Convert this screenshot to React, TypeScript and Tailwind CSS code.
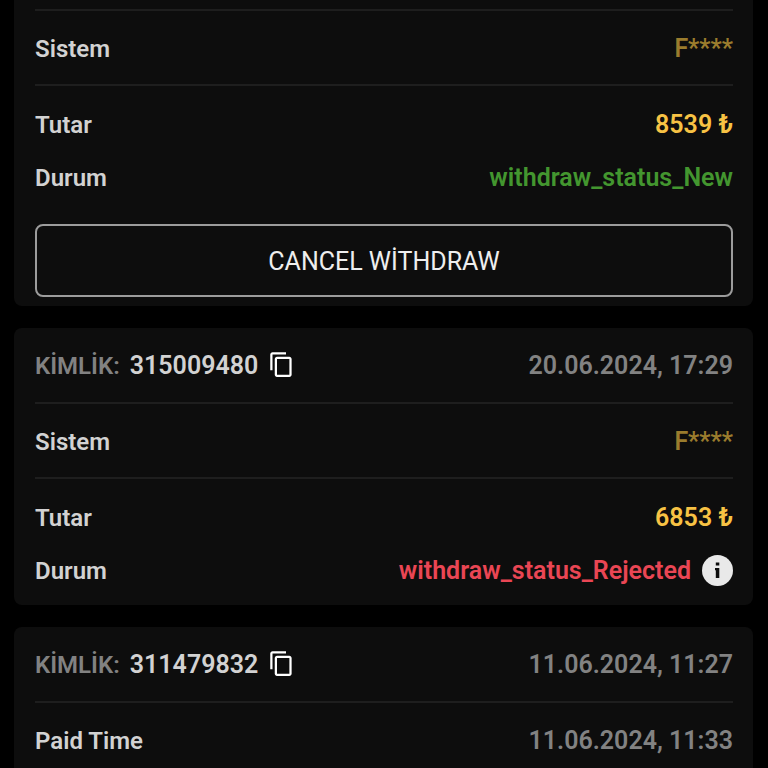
import type { ReactNode } from "react";
import { clsx } from "clsx";
import { MdContentCopy } from "react-icons/md";

type Withdrawal = {
    id?: string;
    date?: string;
    paidTime?: string;
    system?: string;
    amount?: string;
    status?: "New" | "Rejected";
};

const withdrawals: Withdrawal[] = [
    { system: "F****", amount: "8539 ₺", status: "New" },
    { id: "315009480", date: "20.06.2024, 17:29", system: "F****", amount: "6853 ₺", status: "Rejected" },
    { id: "311479832", date: "11.06.2024, 11:27", paidTime: "11.06.2024, 11:33" },
];

function InfoIcon() {
    return (
        <svg viewBox="0 0 31 31" className="size-[31px]" aria-hidden="true">
            <circle cx="15.5" cy="15.5" r="15.5" fill="#e9e9e9" />
            <path d="M13.8 7.6h3.5v2.8h-3.5zM13 13h4.3v10h-3.5v-7.8H13z" fill="#0d0d0d" />
        </svg>
    );
}

function DividedRow({ label, children }: { label: string; children: ReactNode }) {
    return (
        <div className="flex h-[75px] items-center justify-between border-t-2 border-[#1e1e1e] pt-0.5">
            <dt className="text-2xl">{label}</dt>
            {children}
        </div>
    );
}

function WithdrawalCard({ item }: { item: Withdrawal }) {
    return (
        <article
            className={clsx(
                "bg-[#0d0d0d] pr-5 pl-[21px]",
                item.id ? "rounded-lg" : "rounded-b-lg pt-[9px]",
                item.status && "pb-2",
            )}
        >
            {item.id && (
                <header className="flex h-[74px] items-center justify-between pt-0.5 text-[#828282]">
                    <div className="flex items-center">
                        <span className="text-2xl">KİMLİK:</span>
                        <span className="ml-2.5 text-[#d2d2d2]">{item.id}</span>
                        <button type="button" aria-label="Kopyala" className="mb-1 ml-2.5 text-white">
                            <MdContentCopy className="size-[27px]" />
                        </button>
                    </div>
                    <time>{item.date}</time>
                </header>
            )}

            <dl>
                {item.paidTime && (
                    <DividedRow label="Paid Time">
                        <dd className="text-[#828282]">{item.paidTime}</dd>
                    </DividedRow>
                )}
                {item.system && (
                    <DividedRow label="Sistem">
                        <dd className="text-[#9a7c2d]">{item.system}</dd>
                    </DividedRow>
                )}
                {item.status && (
                    <div className="border-t-2 border-[#1e1e1e] pt-3">
                        <div className="flex h-[53px] items-center justify-between">
                            <dt className="text-2xl">Tutar</dt>
                            <dd className="text-[#f7c244]">{item.amount}</dd>
                        </div>
                        <div className="flex h-[53px] items-center justify-between">
                            <dt className="text-2xl">Durum</dt>
                            <dd
                                className={clsx(
                                    "flex items-center gap-[11px]",
                                    item.status === "New" ? "text-[#43962f]" : "text-[#ea4654]",
                                )}
                            >
                                withdraw_status_{item.status}
                                {item.status === "Rejected" && (
                                    <button type="button" aria-label="Info">
                                        <InfoIcon />
                                    </button>
                                )}
                            </dd>
                        </div>
                    </div>
                )}
            </dl>

            {item.status === "New" && (
                <button
                    type="button"
                    className="mt-5 mb-px h-[73px] w-full rounded-lg border-2 border-[#9c9c9c] pt-0.5 font-normal text-[#eeeeee]"
                >
                    CANCEL WİTHDRAW
                </button>
            )}
        </article>
    );
}

export default function App() {
    return (
        <main className="flex h-screen flex-col gap-[22px] overflow-hidden bg-black pr-[15px] pl-[14px] font-['Roboto',sans-serif] text-[25px] leading-8 font-semibold text-[#d2d2d2] *:shrink-0">
            {withdrawals.map((item, i) => (
                <WithdrawalCard key={i} item={item} />
            ))}
        </main>
    );
}
